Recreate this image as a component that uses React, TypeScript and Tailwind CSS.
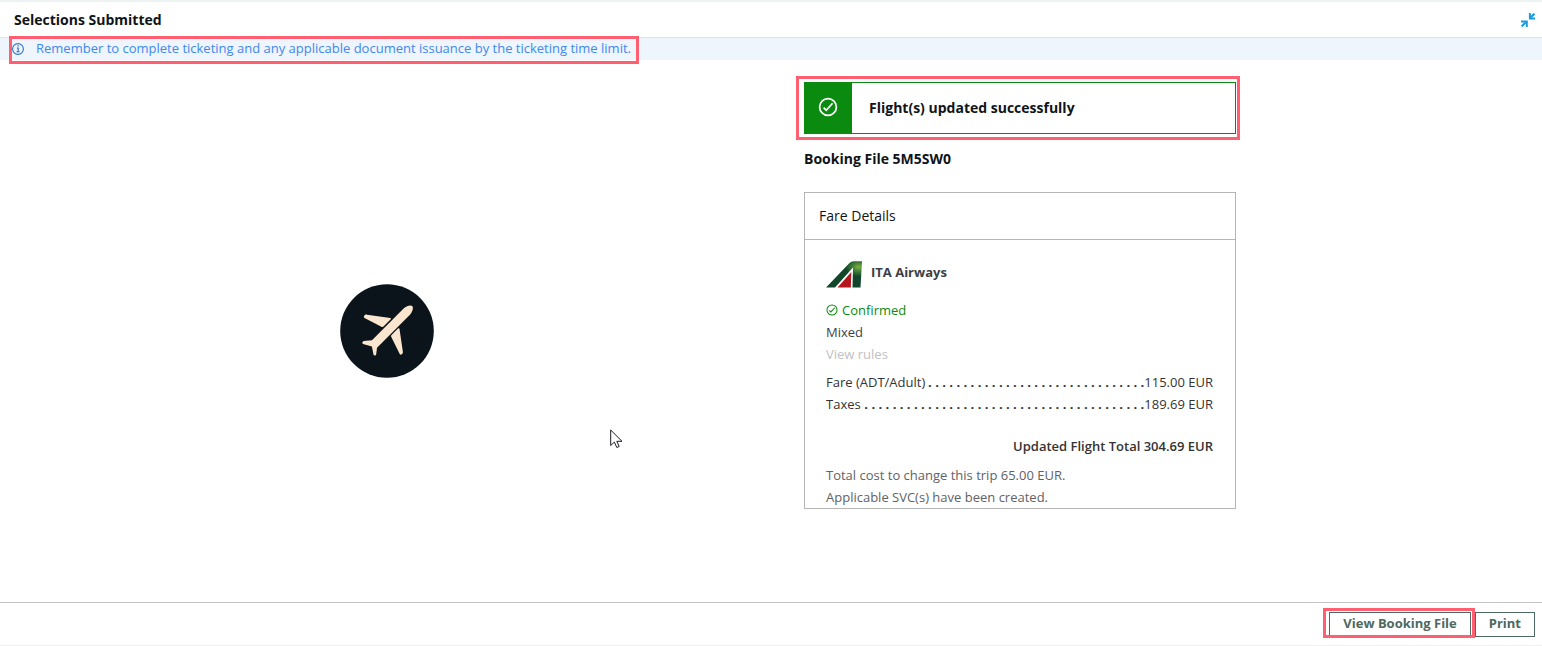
import React from 'react';

interface FareLine {
  label: string;
  amount: string;
  dots: number;
}

const fareLines: FareLine[] = [
  { label: 'Fare (ADT/Adult)', amount: '115.00 EUR', dots: 31 },
  { label: 'Taxes', amount: '189.69 EUR', dots: 40 },
];

function CheckCircle({ className }: { className: string }) {
  return (
    <svg viewBox="0 0 20 20" fill="none" stroke="currentColor" strokeWidth="1.7" className={className} aria-hidden="true">
      <circle cx="10" cy="10" r="8.4" />
      <path d="M5.6 10.6 8.2 13.2 14.6 6.2" />
    </svg>
  );
}

function InfoIcon() {
  return (
    <svg viewBox="0 0 12 12" fill="none" stroke="currentColor" className="size-3 shrink-0" aria-hidden="true">
      <circle cx="6" cy="6" r="5.4" strokeWidth="1.1" />
      <path d="M4.9 5.1h1.3v3.4M4.6 8.6h2.9" strokeWidth="1.1" />
      <path d="M5.4 2.9h1.3" strokeWidth="1.3" />
    </svg>
  );
}

function CollapseIcon() {
  return (
    <svg viewBox="0 0 14 14" className="size-3.5" fill="none" stroke="currentColor" aria-hidden="true">
      <path d="M13.4.7 9.3 4.8M.6 13.4l4.2-4.2" strokeWidth="2.2" />
      <path d="M8.9 0v5.6h5.1M0 8.4h5.8V14" strokeWidth="2" />
    </svg>
  );
}

function PlaneBadge() {
  return (
    <svg viewBox="0 0 94 94" className="size-[94px]" role="img" aria-label="Airplane">
      <circle cx="47" cy="47" r="46.8" fill="#0a141a" />
      <g fill="#fae6cf">
        <path d="M63.6 24.4c3.2-2.8 7.2-3.6 8.6-2.3 1.5 1.4.6 5.4-2 8.4L37 63.8l-.8 6.4c-.2 1-1.6 1.8-2.6.8L31.9 62.5 23 60c-1.2-.6-.7-2.4.6-3l8.4-.8z" />
        <path d="M24 32.2c.6-1.2 1.4-1.8 3-1.5L50.4 34c.6.2.8.7.3 1.2L43.5 42.6c-.5.5-1 .6-1.6.3L24.5 33.9c-.7-.4-.8-1-.5-1.7z" />
        <path d="M51.3 51.3 58 44.5c.7-.6 1.4-.4 1.5.4L62.9 68c.1 1.3-.5 2-1.5 2.5-.8.3-1.4.1-1.8-.7L51.2 52.7c-.3-.5-.2-1 .1-1.4z" />
      </g>
    </svg>
  );
}

function AirlineLogo() {
  return (
    <svg viewBox="0 0 36 27" className="h-[27px] w-9" role="img" aria-label="ITA Airways logo">
      <defs>
        <radialGradient id="tail" cx="0.9" cy="0.22" r="0.36">
          <stop offset="0" stopColor="#7fae42" />
          <stop offset="0.5" stopColor="#3d7a35" />
          <stop offset="1" stopColor="#12462b" />
        </radialGradient>
      </defs>
      <path d="M0 26.5 23 2.5Q25 .3 28 .3h8L34.5 26.5H26.500L27 6.500 9 26.500z" fill="url(#tail)" />
      <path d="M11.5 26.5 25.3 11 24.8 26.5z" fill="#b3161d" />
    </svg>
  );
}

function Highlight({ className }: { className: string }) {
  return <span aria-hidden="true" className={`pointer-events-none absolute border-3 border-[#ff6071] ${className}`} />;
}

export default function App() {
  return (
    <div className="relative flex min-h-screen flex-col border-t-2 border-[#edf2f2] bg-white font-['Open_Sans',sans-serif] text-[13px] text-[#3c3f45]">
      <header className="flex h-9 items-center justify-between border-b border-[#dfe2e5] pr-[7px] pl-3.5">
        <h1 className="text-sm font-bold text-[#101418]">Selections Submitted</h1>
        <button type="button" aria-label="Collapse" className="text-[#1b9be0]">
          <CollapseIcon />
        </button>
      </header>

      <div className="flex bg-[#eef5fd] pl-3">
        <p className="relative flex h-[22px] items-center gap-3 text-[#3f88f0]">
          <span className="text-[#2f74c8]">
            <InfoIcon />
          </span>
          Remember to complete ticketing and any applicable document issuance by the ticketing time limit.
          <Highlight className="-top-0.5 -right-2 -bottom-1 -left-[3px]" />
        </p>
      </div>

      <main className="flex flex-1">
        <div className="flex w-1/2 items-center justify-center pl-0.5">
          <PlaneBadge />
        </div>

        <div className="w-1/2 pt-[22px] pl-[33px]">
          <div className="max-w-[432px]">
            <div role="status" className="relative flex h-[52px] border border-[#0a8a0f]">
              <div className="flex w-[47px] items-center justify-center bg-[#0a8a0f] pr-px pb-0.5 text-white">
                <CheckCircle className="size-5" />
              </div>
              <p className="flex items-center pl-[17px] text-sm font-bold text-[#101418]">
                Flight(s) updated successfully
              </p>
              <Highlight className="-top-[7px] -right-[5px] -bottom-[7px] -left-[9px]" />
            </div>

            <h2 className="mt-3.5 text-sm leading-[22px] font-bold text-[#101418]">Booking File 5M5SW0</h2>

            <section className="mt-[22px] border border-[#b5b5b5]">
              <h3 className="border-b border-[#b5b5b5] px-3.5 py-3 text-sm leading-[22px] text-[#101418]">Fare Details</h3>

              <div className="pr-[22px] pl-[21px] leading-[22px]">
                <div className="flex items-start gap-[9px] pt-[21px]">
                  <AirlineLogo />
                  <span className="font-bold">ITA Airways</span>
                </div>

                <div className="mt-[11px]">
                  <p className="flex items-center gap-1 text-[#0a8a0f]">
                    <CheckCircle className="size-3" />
                    Confirmed
                  </p>
                  <p>Mixed</p>
                  <p className="text-[#bfc1c3]">View rules</p>
                </div>

                <dl className="mt-1.5 text-[#333]">
                  {fareLines.map((line) => (
                    <div key={line.label} className="flex">
                      <dt>{line.label}</dt>
                      <span aria-hidden="true" className="flex-1 text-right font-bold whitespace-nowrap">
                        {Array(line.dots).fill('.').join(' ')}
                      </span>
                      <dd>{line.amount}</dd>
                    </div>
                  ))}
                </dl>

                <p className="mt-5 text-right font-semibold text-[#333]">Updated Flight Total 304.69 EUR</p>

                <div className="mt-[7px] text-[#5f6266]">
                  <p>Total cost to change this trip 65.00 EUR.</p>
                  <p>Applicable SVC(s) have been created.</p>
                </div>
              </div>
            </section>
          </div>
        </div>
      </main>

      <footer className="flex h-11 items-start justify-end gap-1 border-t border-b border-t-[#c4c4c4] border-b-[#efefef] pt-[9px] pr-[7px] text-[#4d6960]">
        <div className="relative">
          <button type="button" className="h-[25px] border border-[#4d6960] px-[13px] pb-0.5 font-bold">
            View Booking File
          </button>
          <Highlight className="-top-1 -right-1 -bottom-px -left-1.5" />
        </div>
        <button type="button" className="h-[25px] border border-[#4d6960] px-[13px] pb-0.5 font-bold">
          Print
        </button>
      </footer>

      {/* Mouse pointer */}
      <svg viewBox="0 0 13 20" className="pointer-events-none absolute top-[427px] left-[610px] h-5 w-[13px]" aria-hidden="true">
        <path d="M.7 1v15.5l3.7-3.4 2.4 5.4 2.4-1-2.4-5.2H12z" fill="#fff" stroke="#1c1c24" strokeWidth="1" />
      </svg>
    </div>
  );
}
